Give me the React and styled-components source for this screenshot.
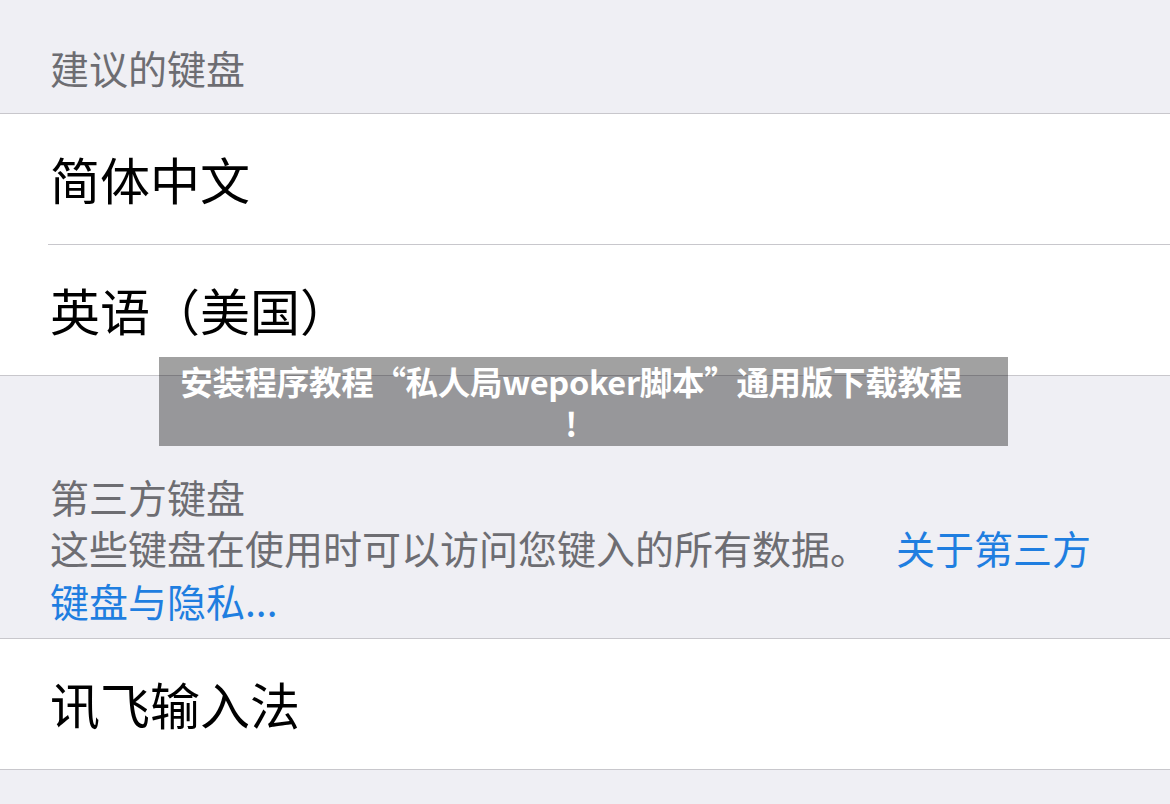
import React from "react";
import styled, { createGlobalStyle } from "styled-components";

const GlobalStyle = createGlobalStyle`
  html, body {
    margin: 0;
    padding: 0;
    background: #efeff4;
  }
  body {
    font-family: "Noto Sans CJK SC", "Noto Sans", sans-serif;
    -webkit-font-smoothing: antialiased;
  }
`;

const Page = styled.div`
  position: relative;
  width: 1170px;
  height: 804px;
  overflow: hidden;
  background: #efeff4;
`;

const SectionHeader = styled.div`
  height: 92px;
  padding: 21px 50px 0;
  display: flex;
  align-items: center;
  font-size: 39px;
  color: #6d6d72;
`;

const Group = styled.div`
  background: #ffffff;
  border-top: 1px solid #c8c7cc;
  border-bottom: 1px solid #c8c7cc;
`;

const Row = styled.div`
  box-sizing: border-box;
  height: ${(p) => (p.$first ? "130px" : "131px")};
  margin-left: 48px;
  padding: 0 0 3px 2px;
  display: flex;
  align-items: center;
  font-size: 50px;
  color: #000000;
  border-top: ${(p) => (p.$first ? "none" : "1px solid #c8c7cc")};
`;

const Footer = styled.div`
  padding: 95px 60px 11px 50px;
  color: #6d6d72;
`;

const FooterTitle = styled.div`
  font-size: 39px;
  line-height: 50px;
`;

const FooterText = styled.div`
  font-size: 39px;
  line-height: 53px;
`;

const Link = styled.span`
  color: #1f7ee0;
  margin-left: 27px;
`;

const Banner = styled.div`
  position: absolute;
  left: 159px;
  top: 357px;
  width: 849px;
  box-sizing: border-box;
  padding: 3px 41px 2px 16px;
  background: rgba(0, 0, 0, 0.37);
  color: #ffffff;
  font-weight: 700;
  font-size: 32.5px;
  letter-spacing: -0.3px;
  line-height: 42px;
  text-align: center;
  line-break: anywhere;
`;

export default function App() {
  return (
    <>
      <GlobalStyle />
      <Page>
        <SectionHeader>建议的键盘</SectionHeader>
        <Group>
          <Row $first>简体中文</Row>
          <Row>英语（美国）</Row>
        </Group>
        <Footer>
          <FooterTitle>第三方键盘</FooterTitle>
          <FooterText>
            这些键盘在使用时可以访问您键入的所有数据。<Link>关于第三方键盘与隐私...</Link>
          </FooterText>
        </Footer>
        <Group>
          <Row $first>讯飞输入法</Row>
        </Group>
        <Banner>安装程序教程“私人局wepoker脚本”通用版下载教程!</Banner>
      </Page>
    </>
  );
}
